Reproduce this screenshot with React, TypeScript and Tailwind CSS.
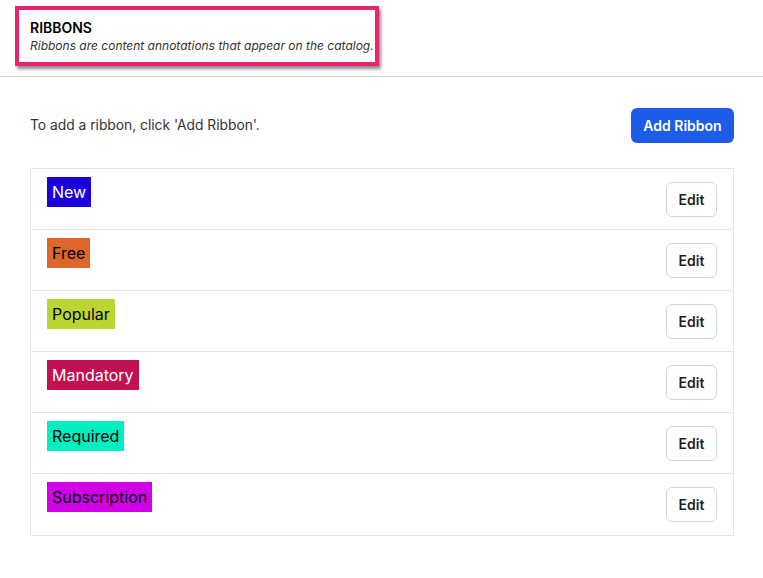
const ribbons = [
    { name: "New", bg: "bg-[#1b00de]", fg: "text-white" },
    { name: "Free", bg: "bg-[#dd672a]", fg: "text-black" },
    { name: "Popular", bg: "bg-[#bbd631]", fg: "text-black" },
    { name: "Mandatory", bg: "bg-[#c21152]", fg: "text-white" },
    { name: "Required", bg: "bg-[#00efc1]", fg: "text-black" },
    { name: "Subscription", bg: "bg-[#d200e6]", fg: "text-black" },
];

export default function App() {
    return (
        <div className="min-h-screen w-full bg-white font-['Inter',sans-serif] text-[#1f1f1f]">
            <header className="h-[77px] border-b border-[#d4d4d4] pt-[6px] pl-[15px]">
                <div className="w-[364px] h-[60px] border-4 border-[#e8246f] shadow-[2px_3px_3px_rgba(0,0,0,0.45)] pl-[11px] pt-[9px]">
                    <div className="text-[14px] leading-[18px] font-semibold text-black">RIBBONS</div>
                    <div className="text-[12px] leading-[18px] italic text-[#333]">
                        Ribbons are content annotations that appear on the catalog.
                    </div>
                </div>
            </header>

            <main className="pl-[30px] pr-[29px]">
                <div className="mt-[31px] flex items-center justify-between">
                    <span className="text-[13.8px] text-[#333]">To add a ribbon, click 'Add Ribbon'.</span>
                    <button className="h-[35px] w-[103px] rounded-md bg-[#1d5be9] text-[14px] font-semibold text-white">
                        Add Ribbon
                    </button>
                </div>

                <div className="mt-[25px] border border-[#e5e5e5] divide-y divide-[#e5e5e5]">
                    {ribbons.map((r) => (
                        <div key={r.name} className="h-[61px] flex justify-between pl-4 pr-4 pt-2">
                            <span className={`h-[30px] px-[5px] text-[16px] leading-[30px] ${r.bg} ${r.fg}`}>
                                {r.name}
                            </span>
                            <button className="self-center -mt-2 h-[35px] w-[51px] rounded-md border border-[#d1d5db] bg-white text-[14px] font-semibold text-[#1f1f1f]">
                                Edit
                            </button>
                        </div>
                    ))}
                </div>
            </main>
        </div>
    );
}
